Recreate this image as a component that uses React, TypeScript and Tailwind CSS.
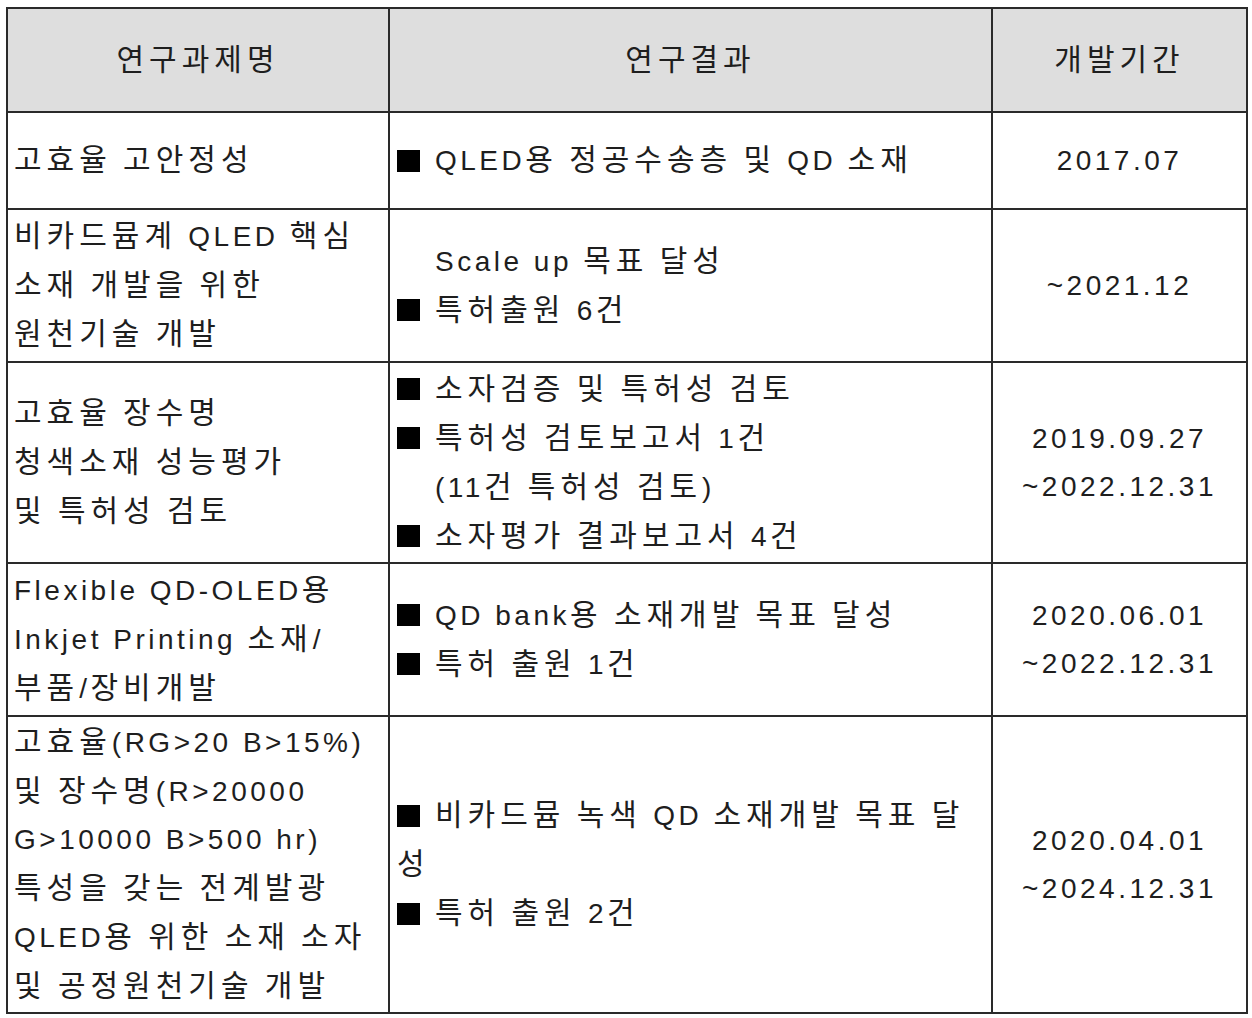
const rows: { name: string[]; result: { bullet: boolean; text: string }[]; period: string[]; h: string }[] = [
  {
    name: ['고효율 고안정성'],
    result: [{ bullet: true, text: 'QLED용 정공수송층 및 QD 소재' }],
    period: ['2017.07'],
    h: 'h-[97px]',
  },
  {
    name: ['비카드뮴계 QLED 핵심', '소재 개발을 위한', '원천기술 개발'],
    result: [
      { bullet: false, text: 'Scale up 목표 달성' },
      { bullet: true, text: '특허출원 6건' },
    ],
    period: ['~2021.12'],
    h: 'h-[153px]',
  },
  {
    name: ['고효율 장수명', '청색소재 성능평가', '및 특허성 검토'],
    result: [
      { bullet: true, text: '소자검증 및 특허성 검토' },
      { bullet: true, text: '특허성 검토보고서 1건' },
      { bullet: false, text: '(11건 특허성 검토)' },
      { bullet: true, text: '소자평가 결과보고서 4건' },
    ],
    period: ['2019.09.27', '~2022.12.31'],
    h: 'h-[201px]',
  },
  {
    name: ['Flexible QD-OLED용', 'Inkjet Printing 소재/', '부품/장비개발'],
    result: [
      { bullet: true, text: 'QD bank용 소재개발 목표 달성' },
      { bullet: true, text: '특허 출원 1건' },
    ],
    period: ['2020.06.01', '~2022.12.31'],
    h: 'h-[153px]',
  },
  {
    name: [
      '고효율(RG>20 B>15%)',
      '및 장수명(R>20000',
      'G>10000 B>500 hr)',
      '특성을 갖는 전계발광',
      'QLED용 위한 소재 소자',
      '및 공정원천기술 개발',
    ],
    result: [
      { bullet: true, text: '비카드뮴 녹색 QD 소재개발 목표 달' },
      { bullet: false, text: '성' },
      { bullet: true, text: '특허 출원 2건' },
    ],
    period: ['2020.04.01', '~2024.12.31'],
    h: 'h-[297px]',
  },
];

// hangul runs get a bigger size and wider tracking, like the document font
function Txt({ s }: { s: string }) {
  return (
    <>
      {s.split(/([\uAC00-\uD7A3]+)/).map((p, i) =>
        /[\uAC00-\uD7A3]/.test(p) ? (
          <span key={i} className="text-[30px] tracking-[5px]">{p}</span>
        ) : (
          <span key={i}>{p}</span>
        )
      )}
    </>
  );
}

export default function App() {
  return (
    <div
      className="min-h-screen bg-white pl-[6px] pt-[7px] text-[28px] leading-[48px] tracking-[3.5px] text-[#1e1e1e]"
      style={{ fontFamily: '"Liberation Sans", "Noto Sans CJK KR", sans-serif' }}
    >
      <table className="w-[1240px] table-fixed border-collapse border-2 border-[#3a3a3a]">
        <colgroup>
          <col className="w-[382px]" />
          <col className="w-[603px]" />
          <col className="w-[255px]" />
        </colgroup>
        <thead>
          <tr className="h-[104px] bg-[#dedede]">
            <th className="border-2 border-[#2a2a2a] font-normal"><Txt s="연구과제명" /></th>
            <th className="border-2 border-[#2a2a2a] font-normal"><Txt s="연구결과" /></th>
            <th className="border-2 border-[#2a2a2a] font-normal"><Txt s="개발기간" /></th>
          </tr>
        </thead>
        <tbody>
          {rows.map((r, i) => (
            <tr key={i} className={r.h}>
              <td className="border-2 border-[#2a2a2a] pl-[6px] align-middle">
                {r.name.map((l, j) => (
                  <div key={j} className="whitespace-nowrap"><Txt s={l} /></div>
                ))}
              </td>
              <td className="border-2 border-[#2a2a2a] pl-[7px] align-middle">
                {r.result.map((l, j) => (
                  <div key={j} className="flex items-center whitespace-nowrap">
                    {l.bullet ? (
                      <span className="mr-[14px] inline-flex w-[24px] items-center">
                        <span className="h-[22px] w-[23px] bg-black" />
                      </span>
                    ) : (
                      l.text !== '성' && <span className="mr-[14px] w-[24px]" />
                    )}
                    <span><Txt s={l.text} /></span>
                  </div>
                ))}
              </td>
              <td className="border-2 border-[#2a2a2a] text-center align-middle">
                {r.period.map((l, j) => (
                  <div key={j}>{l}</div>
                ))}
              </td>
            </tr>
          ))}
        </tbody>
      </table>
    </div>
  );
}
